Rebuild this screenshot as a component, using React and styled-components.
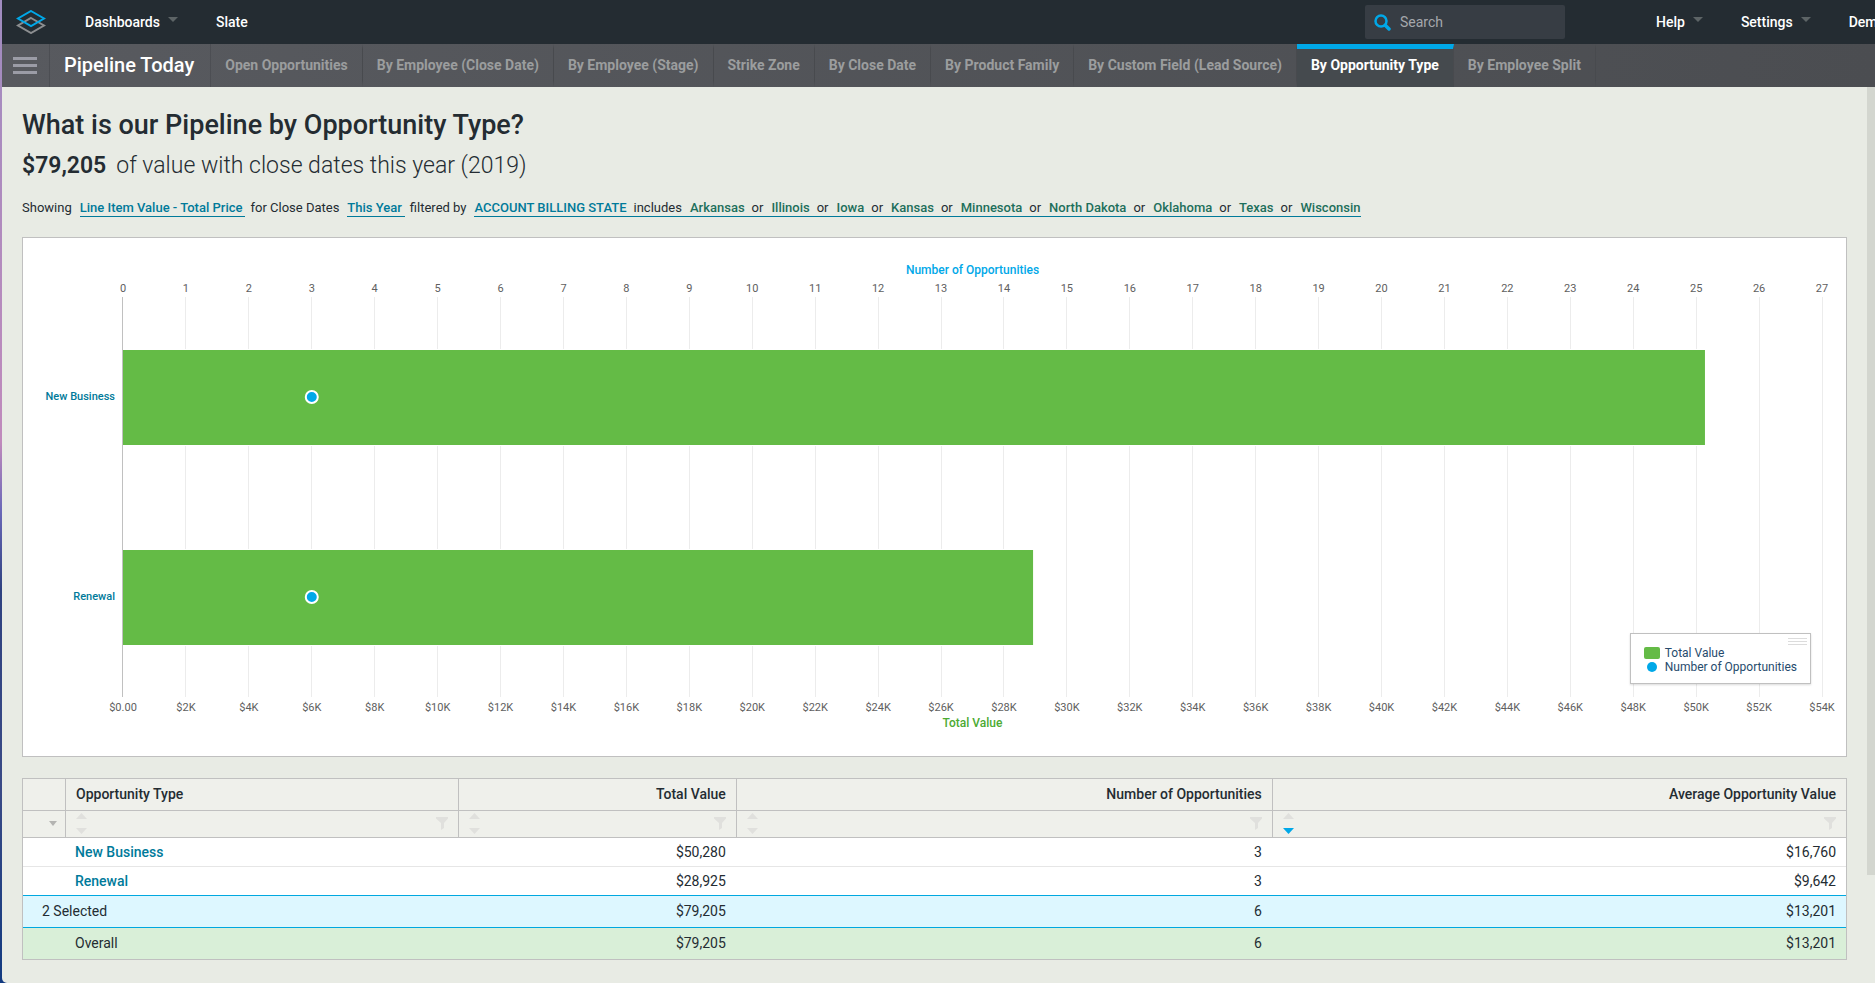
import React, { useState } from "react";
import styled, { createGlobalStyle } from "styled-components";

const tabs = [
  "Open Opportunities",
  "By Employee (Close Date)",
  "By Employee (Stage)",
  "Strike Zone",
  "By Close Date",
  "By Product Family",
  "By Custom Field (Lead Source)",
  "By Opportunity Type",
  "By Employee Split",
];

const states = [
  "Arkansas",
  "Illinois",
  "Iowa",
  "Kansas",
  "Minnesota",
  "North Dakota",
  "Oklahoma",
  "Texas",
  "Wisconsin",
];

const rows = [
  { name: "New Business", value: 50280, count: 3, average: 16760 },
  { name: "Renewal", value: 28925, count: 3, average: 9642 },
];

const columns = [
  { label: "Opportunity Type" },
  { label: "Total Value", right: true },
  { label: "Number of Opportunities", right: true },
  { label: "Average Opportunity Value", right: true, sorted: true },
];

const MAX_COUNT = 27;
const MAX_VALUE = 54000;
const ticks = Array.from({ length: MAX_COUNT + 1 }, (_, i) => i);

const money = (n) => "$" + n.toLocaleString("en-US");
const pct = (n, max) => (n / max) * 100 + "%";

const Logo = () => (
  <svg width="30" height="24" viewBox="0 0 30 24" fill="none" strokeWidth="2">
    <path d="M15 8L28 15.500L15 23L2 15.500Z" stroke="#8c8e90" />
    <path d="M15 1L28 8.500L15 16L2 8.500Z" stroke="#00a8e8" />
  </svg>
);

const Caret = () => (
  <CaretSvg width="10" height="5" viewBox="0 0 10 5">
    <path d="M0 0h10L5 5z" fill="#5d6466" />
  </CaretSvg>
);

const SortIcon = ({ down }) => (
  <svg width="11" height="21" viewBox="0 0 11 21">
    <path d="M5.500 0L11 6H0z" fill="#e0e0dd" />
    <path d="M0 15h11l-5.500 6z" fill={down ? "#00a8e8" : "#e0e0dd"} />
  </svg>
);

const FilterIcon = () => (
  <svg width="12" height="13" viewBox="0 0 12 13">
    <path d="M0 0h12v1.500L8 6v5L5 13V6L0 1.500z" fill="#e0e0dd" />
  </svg>
);

const Chart = () => (
  <Plot>
    <PlotSvg role="img" aria-label="Pipeline by opportunity type">
      <AxisTitle x="50%" y="36" fill="#00a8e8">
        Number of Opportunities
      </AxisTitle>
      {ticks.map((t) => (
        <React.Fragment key={t}>
          <TickText x={pct(t, MAX_COUNT)} y="54">
            {t}
          </TickText>
          {t > 0 && (
            <GridLine
              x1={pct(t, MAX_COUNT)}
              x2={pct(t, MAX_COUNT)}
              y1="59"
              y2="459"
            />
          )}
          <TickText x={pct(t, MAX_COUNT)} y="473">
            {t === 0 ? "$0.00" : `$${t * 2}K`}
          </TickText>
        </React.Fragment>
      ))}
      {rows.map((row, i) => (
        <React.Fragment key={row.name}>
          <Bar x="0" y={112 + i * 200} width={pct(row.value, MAX_VALUE)} height="95" />
          <Dot cx={pct(row.count, MAX_COUNT)} cy={159 + i * 200} r="6" />
          <CategoryText x="-8" y={162 + i * 200}>
            {row.name}
          </CategoryText>
        </React.Fragment>
      ))}
      <GridLine x1="-1" x2="-1" y1="59" y2="459" $axis />
      <AxisTitle x="50%" y="489" fill="#4cab33">
        Total Value
      </AxisTitle>
    </PlotSvg>
  </Plot>
);

const Legend = () => (
  <LegendBox>
    <Grip width="19" height="8" viewBox="0 0 19 8">
      <path d="M0 .5h19M0 3.500h19M0 6.500h19" stroke="#dcdcdc" />
    </Grip>
    <LegendRow>
      <svg width="16" height="12">
        <rect width="16" height="12" rx="2" fill="#64bb46" />
      </svg>
      Total Value
    </LegendRow>
    <LegendRow>
      <svg width="16" height="12">
        <circle cx="8" cy="6" r="5" fill="#00a8e8" />
      </svg>
      Number of Opportunities
    </LegendRow>
  </LegendBox>
);

const Summary = ({ kind, children, span }) => (
  <SummaryRow $kind={kind}>
    {!span && <td />}
    <NameCell colSpan={span} $wide={!!span}>
      {children}
    </NameCell>
    <NumberCell>{money(79205)}</NumberCell>
    <NumberCell>6</NumberCell>
    <NumberCell>{money(13201)}</NumberCell>
  </SummaryRow>
);

export default function App() {
  const [active, setActive] = useState("By Opportunity Type");
  const [search, setSearch] = useState("");

  return (
    <Window>
      <GlobalStyle />
      <TopBar>
        <LogoLink href="#" aria-label="Home">
          <Logo />
        </LogoLink>
        <MenuButton>
          Dashboards <Caret />
        </MenuButton>
        <MenuButton>Slate</MenuButton>
        <SearchBox>
          <svg width="17" height="17" viewBox="0 0 17 17" fill="none" stroke="#00a8e8">
            <circle cx="7" cy="7" r="5.500" strokeWidth="2.500" />
            <path d="M11.500 11.500l3.500 3.500" strokeWidth="3.500" strokeLinecap="round" />
          </svg>
          <SearchInput
            aria-label="Search"
            placeholder="Search"
            value={search}
            onChange={(e) => setSearch(e.target.value)}
          />
        </SearchBox>
        <UserMenu>
          <MenuButton>
            Help <Caret />
          </MenuButton>
          <MenuButton>
            Settings <Caret />
          </MenuButton>
          <MenuButton>Dem</MenuButton>
        </UserMenu>
      </TopBar>

      <TabBar>
        <Burger aria-label="Menu">
          <svg width="24" height="17" viewBox="0 0 24 17">
            <path d="M0 0h24v3H0zM0 7h24v3H0zM0 14h24v3H0z" fill="#9b9ca6" />
          </svg>
        </Burger>
        <BoardName>Pipeline Today</BoardName>
        {tabs.map((tab) => (
          <Tab key={tab} $active={tab === active} onClick={() => setActive(tab)}>
            {tab}
          </Tab>
        ))}
      </TabBar>

      <Body>
        <Content>
          <Title>What is our Pipeline by Opportunity Type?</Title>
          <Subtitle>
            <strong>$79,205</strong>of value with close dates this year (2019)
          </Subtitle>
          <Filters>
            Showing
            <FilterLink href="#">Line Item Value - Total Price</FilterLink>
            for Close Dates
            <FilterLink href="#">This Year</FilterLink>
            filtered by
            <FilterGroup href="#">
              <b>ACCOUNT BILLING STATE</b>
              <span>includes</span>
              {states.map((state, i) => (
                <React.Fragment key={state}>
                  {i > 0 && <span>or</span>}
                  <StateName>{state}</StateName>
                </React.Fragment>
              ))}
            </FilterGroup>
          </Filters>

          <ChartCard>
            <Chart />
            <Legend />
          </ChartCard>

          <Table>
            <colgroup>
              <Col $width="42px" />
              <Col $width="21.55%" />
              <Col $width="15.25%" />
              <Col $width="29.4%" />
              <Col $width="auto" />
            </colgroup>
            <thead>
              <HeadRow>
                <th />
                {columns.map((c) => (
                  <HeadCell key={c.label} $right={c.right}>
                    {c.label}
                  </HeadCell>
                ))}
              </HeadRow>
              <ToolRow>
                <td>
                  <Tools $end>
                    <IconButton aria-label="Selection">
                      <svg width="8" height="5" viewBox="0 0 8 5">
                        <path d="M0 0h8L4 5z" fill="#b4b4b2" />
                      </svg>
                    </IconButton>
                  </Tools>
                </td>
                {columns.map((c) => (
                  <td key={c.label}>
                    <Tools>
                      <IconButton aria-label={"Sort by " + c.label}>
                        <SortIcon down={c.sorted} />
                      </IconButton>
                      <IconButton aria-label={"Filter " + c.label}>
                        <FilterIcon />
                      </IconButton>
                    </Tools>
                  </td>
                ))}
              </ToolRow>
            </thead>
            <tbody>
              {rows.map((row) => (
                <DataRow key={row.name}>
                  <td />
                  <NameCell>
                    <a href="#">{row.name}</a>
                  </NameCell>
                  <NumberCell>{money(row.value)}</NumberCell>
                  <NumberCell>{row.count}</NumberCell>
                  <NumberCell>{money(row.average)}</NumberCell>
                </DataRow>
              ))}
              <Summary kind="selected" span={2}>
                2 Selected
              </Summary>
              <Summary kind="overall">Overall</Summary>
            </tbody>
          </Table>
        </Content>
        <ScrollTrack>
          <ScrollThumb />
        </ScrollTrack>
      </Body>
    </Window>
  );
}

const GlobalStyle = createGlobalStyle`
  * {
    box-sizing: border-box;
  }
  body {
    margin: 0;
    background: linear-gradient(#a08cc0, #c08abc 45%, #6a68b8 52%, #2f4280 60%, #3a4a86 80%, #123a80);
    font-family: Roboto, "Liberation Sans", sans-serif;
    font-size: 14px;
    color: #242c32;
    overflow: hidden;
  }
  button {
    font: inherit;
    color: inherit;
    background: none;
    border: 0;
    padding: 0;
    cursor: pointer;
  }
  a {
    text-decoration: none;
  }
`;

const Window = styled.div`
  display: flex;
  flex-direction: column;
  min-height: 100vh;
  margin-left: 2px;
  background: #e8ebe4;
  border-bottom-left-radius: 5px;
  overflow: hidden;
`;

const TopBar = styled.header`
  display: flex;
  align-items: center;
  height: 44px;
  padding-left: 14px;
  background: #242c32;
  color: #fff;
`;

const LogoLink = styled.a`
  display: flex;
  margin-right: 39px;
`;

const CaretSvg = styled.svg`
  margin: 0 0 5px 8px;
`;

const MenuButton = styled.button`
  display: flex;
  align-items: center;
  margin-right: 38px;
  font-weight: 500;
  white-space: nowrap;
`;

const SearchBox = styled.label`
  display: flex;
  align-items: center;
  gap: 9px;
  width: 200px;
  height: 34px;
  margin-left: auto;
  padding: 0 9px;
  border-radius: 2px;
  background: #373d44;
`;

const SearchInput = styled.input`
  flex: 1;
  min-width: 0;
  padding: 0;
  border: 0;
  outline: 0;
  background: none;
  color: #fff;
  font: inherit;
  &::placeholder {
    color: #a5a8ac;
    opacity: 1;
  }
`;

const UserMenu = styled.nav`
  display: flex;
  width: 310px;
  padding-left: 91px;
  overflow: hidden;
`;

const TabBar = styled.nav`
  display: flex;
  height: 43px;
  background: linear-gradient(90deg, #585a5f, #4b4d51);
  overflow: hidden;
`;

const Burger = styled.button`
  display: flex;
  align-items: center;
  width: 48px;
  padding-left: 11px;
  border-right: 1px solid #4c4e53;
`;

const BoardName = styled.div`
  padding: 0 16px 0 14px;
  border-right: 1px solid #4c4e53;
  color: #fff;
  font-size: 20px;
  font-weight: 500;
  line-height: 42px;
  white-space: nowrap;
`;

const Tab = styled.button`
  padding: 0 14px;
  border-right: 1px solid #484a4e;
  border-top: 5px solid ${(p) => (p.$active ? "#00a8e8" : "transparent")};
  border-bottom: 7px solid transparent;
  background: ${(p) => (p.$active ? "#454a4e" : "none")};
  color: ${(p) => (p.$active ? "#fff" : "#9b9d9e")};
  font-weight: 700;
  white-space: nowrap;
`;

const Body = styled.div`
  display: flex;
  flex: 1;
`;

const Content = styled.main`
  flex: 1;
  min-width: 0;
  padding: 20px 20px 23px;
`;

const ScrollTrack = styled.div`
  width: 8px;
`;

const ScrollThumb = styled.div`
  height: 88%;
  background: #d3d6cf;
`;

const Title = styled.h1`
  margin: 0;
  font-size: 27px;
  font-weight: 500;
  line-height: 36px;
`;

const Subtitle = styled.h2`
  margin: 0;
  font-size: 23px;
  font-weight: 300;
  line-height: 46px;
  strong {
    margin-right: 10px;
    font-weight: 600;
  }
`;

const Filters = styled.div`
  display: flex;
  align-items: center;
  gap: 8px;
  height: 38px;
  margin-bottom: 10px;
  font-size: 13px;
  line-height: 16px;
  white-space: nowrap;
`;

const FilterLink = styled.a`
  padding-right: 3px;
  margin-right: -3px;
  border-bottom: 1px solid #007a9a;
  color: #007a9a;
  font-weight: 500;
`;

const FilterGroup = styled.a`
  display: flex;
  gap: 7px;
  border-bottom: 1px solid #007a9a;
  color: #242c32;
  b {
    color: #007a9a;
    font-weight: 500;
  }
`;

const StateName = styled.span`
  padding-left: 1px;
  color: #1d6f5b;
  font-weight: 500;
`;

const ChartCard = styled.section`
  position: relative;
  height: 520px;
  border: 1px solid #c0c0c0;
  background: #fff;
`;

const Plot = styled.div`
  padding: 0 24px 0 100px;
`;

const PlotSvg = styled.svg`
  display: block;
  width: 100%;
  height: 518px;
  overflow: visible;
`;

const AxisTitle = styled.text`
  font-size: 12px;
  font-weight: 500;
  text-anchor: middle;
`;

const TickText = styled.text`
  font-size: 11px;
  fill: #606060;
  text-anchor: middle;
`;

const CategoryText = styled.text`
  font-size: 11px;
  font-weight: 500;
  fill: #007a9a;
  text-anchor: end;
`;

const GridLine = styled.line`
  stroke: ${(p) => (p.$axis ? "#c0c0c0" : "#ececec")};
  shape-rendering: crispEdges;
`;

const Bar = styled.rect`
  fill: #64bb46;
  stroke: #fff;
  stroke-width: 2;
  paint-order: stroke;
`;

const Dot = styled.circle`
  fill: #00a8e8;
  stroke: #fff;
  stroke-width: 2;
`;

const LegendBox = styled.div`
  position: absolute;
  right: 35px;
  bottom: 72px;
  padding: 12px 13px 9px;
  border: 1px solid #c0c0c0;
  background: #fff;
  box-shadow: 0 1px 2px rgba(0, 0, 0, 0.15);
`;

const Grip = styled.svg`
  position: absolute;
  top: 4px;
  right: 3px;
`;

const LegendRow = styled.div`
  display: flex;
  align-items: center;
  gap: 5px;
  color: #274b6d;
  font-size: 12px;
  line-height: 14px;
`;

const Table = styled.table`
  width: 100%;
  margin-top: 21px;
  table-layout: fixed;
  border: 1px solid #c0c0c0;
  border-collapse: separate;
  border-spacing: 0;
  td,
  th {
    padding: 0;
  }
`;

const Col = styled.col`
  width: ${(p) => p.$width};
`;

const HeadRow = styled.tr`
  height: 32px;
  background: #eff0eb;
  th {
    border-bottom: 1px solid #c0c0c0;
  }
  th + th {
    border-left: 1px solid #c0c0c0;
  }
`;

const HeadCell = styled.th`
  && {
    padding: 0 10px 2px;
  }
  font-weight: 500;
  text-align: ${(p) => (p.$right ? "right" : "left")};
`;

const ToolRow = styled.tr`
  height: 27px;
  background: #eff0eb;
  td {
    border-bottom: 1px solid #c0c0c0;
  }
  td + td {
    border-left: 1px solid #c0c0c0;
  }
`;

const Tools = styled.div`
  display: flex;
  align-items: center;
  justify-content: ${(p) => (p.$end ? "flex-end" : "space-between")};
  height: 26px;
  padding: 0 ${(p) => (p.$end ? "8px" : "10px")} 2px;
`;

const IconButton = styled.button`
  display: flex;
`;

const DataRow = styled.tr`
  height: 29px;
  background: #fff;
  td {
    border-bottom: 1px solid #e6e6e6;
  }
  &:nth-child(2) td {
    border-bottom-color: #00a8e0;
  }
  a {
    color: #007a9a;
    font-weight: 500;
  }
`;

const SummaryRow = styled.tr`
  height: ${(p) => (p.$kind === "selected" ? "32px" : "31px")};
  background: ${(p) => (p.$kind === "selected" ? "#ddf7ff" : "#d9efd8")};
  && td {
    padding-bottom: 2px;
    border-bottom: ${(p) => (p.$kind === "selected" ? "1px solid #00a8e0" : "0")};
  }
`;

const NameCell = styled.td`
  && {
    padding-left: ${(p) => (p.$wide ? "19px" : "10px")};
  }
`;

const NumberCell = styled.td`
  && {
    padding-right: 10px;
  }
  text-align: right;
`;
